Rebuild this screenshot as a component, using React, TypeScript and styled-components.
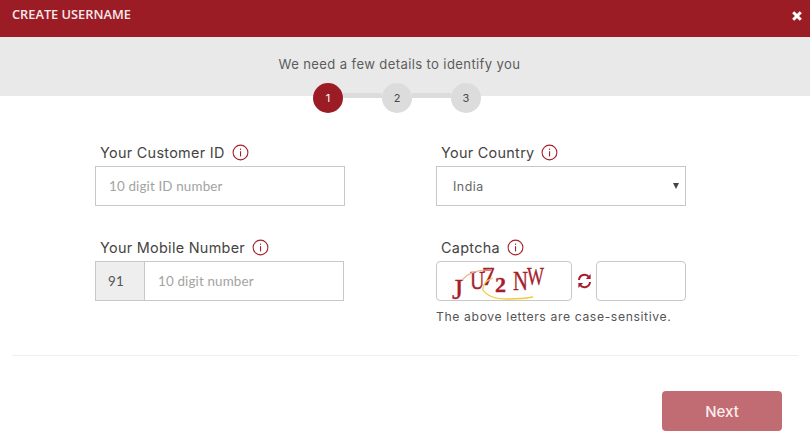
import React from "react";
import styled, { createGlobalStyle } from "styled-components";

const Global = createGlobalStyle`
  html, body { margin: 0; padding: 0; background: #fff; }
  body { font-family: "Inter", "Liberation Sans", sans-serif; overflow: hidden; }
  * { box-sizing: border-box; }
`;

const Page = styled.div`
  width: 810px;
  height: 442px;
  display: flex;
  flex-direction: column;
  background: #fff;
`;
const Header = styled.header`
  height: 37px;
  background: #9c1c26;
  display: flex;
  justify-content: space-between;
  align-items: flex-start;
  padding: 6px 7px 0 12px;
`;
const Title = styled.h1`
  margin: 0;
  font: 600 12.8px/16px "Open Sans", sans-serif;
  color: #f6e9ea;
`;
const Close = styled.button`
  border: 0;
  background: none;
  padding: 0;
  margin-top: 4px;
  width: 12px;
  height: 12px;
  display: flex;
`;
const Band = styled.div`
  height: 59px;
  background: #e9e9e9;
  display: flex;
  flex-direction: column;
  align-items: center;
  padding-top: 19px;
`;
const Lead = styled.p`
  margin: 0 11px 10px 0;
  height: 17px;
  font: 400 13.1px/17px "Inter", sans-serif;
  letter-spacing: 0.37px;
  color: #5c5c5c;
`;
const Stepper = styled.div`
  display: flex;
  align-items: center;
  flex: none;
  margin-right: 16px;
`;
const Step = styled.div<{ $active?: boolean }>`
  width: 30px;
  height: 30px;
  border-radius: 50%;
  display: flex;
  align-items: center;
  justify-content: center;
  font: 400 11px/1 "Inter", sans-serif;
  background: ${(p) => (p.$active ? "#9c1c26" : "#dcdcdc")};
  color: ${(p) => (p.$active ? "#fff" : "#4a4a4a")};
`;
const Connector = styled.div`
  width: 39px;
  height: 5px;
  margin-top: -5px;
  background: #dcdcdc;
`;
const Form = styled.div`
  display: grid;
  grid-template-columns: 250px 250px;
  column-gap: 91px;
  row-gap: 31px;
  padding: 46px 0 0 95px;
`;
const Field = styled.div`
  display: flex;
  flex-direction: column;
  min-width: 0;
`;
const LabelRow = styled.div`
  height: 24px;
  display: flex;
  align-items: center;
  gap: 7px;
  padding: 0 0 3px 5px;
`;
const Label = styled.label`
  font: 400 14.4px/20px "Inter", sans-serif;
  letter-spacing: 0.3px;
  color: #444;
`;
const InfoIcon = styled.svg`
  width: 17px;
  height: 17px;
  flex: none;
`;
const TextInput = styled.input<{ $flush?: boolean }>`
  width: ${(p) => (p.$flush ? "auto" : "100%")};
  flex: ${(p) => (p.$flush ? 1 : "none")};
  min-width: 0;
  height: ${(p) => (p.$flush ? "38px" : "40px")};
  border: ${(p) => (p.$flush ? "0" : "1px solid #c8c8c8")};
  background: #fff;
  padding: 0 13px;
  font: 400 13.4px "Lato", sans-serif;
  letter-spacing: 0.15px;
  color: #555;
  outline: none;
  &::placeholder { color: #a3a3a3; opacity: 1; }
`;
const SelectWrap = styled.div`
  position: relative;
  height: 40px;
`;
const Select = styled.select`
  appearance: none;
  width: 100%;
  height: 100%;
  border: 1px solid #c8c8c8;
  border-radius: 0;
  background: #fff;
  padding: 0 0 0 16px;
  font: 400 12.4px "Inter", sans-serif;
  letter-spacing: 0.5px;
  color: #666;
  outline: none;
`;
const Caret = styled.span`
  position: absolute;
  right: 7px;
  top: 17px;
  width: 0;
  height: 0;
  border-left: 3px solid transparent;
  border-right: 3px solid transparent;
  border-top: 6px solid #444;
  pointer-events: none;
`;
const PhoneGroup = styled.div`
  display: flex;
  height: 40px;
  width: 249px;
  border: 1px solid #c8c8c8;
`;
const Prefix = styled.span`
  width: 49px;
  flex: none;
  background: #eee;
  border-right: 1px solid #c8c8c8;
  padding-left: 12px;
  font: 400 13.4px/38px "Lato", sans-serif;
  letter-spacing: 0.3px;
  color: #555;
`;
const CaptchaRow = styled.div`
  display: flex;
  align-items: center;
  height: 40px;
`;
const CaptchaBox = styled.div`
  width: 136px;
  height: 40px;
  border: 1px solid #c8c8c8;
  border-radius: 4px;
  flex: none;
  overflow: hidden;
`;
const CaptchaArt = styled.svg`
  width: 134px;
  height: 38px;
  display: block;
`;
const Refresh = styled.button`
  width: 24px;
  flex: none;
  border: 0;
  background: none;
  padding: 0;
  display: flex;
  justify-content: center;
`;
const CaptchaInput = styled.input`
  width: 90px;
  height: 40px;
  border: 1px solid #c8c8c8;
  border-radius: 4px;
  background: #fff;
  outline: none;
`;
const Note = styled.p`
  margin: 8px 0 0;
  font: 400 12.2px/16px "Inter", sans-serif;
  letter-spacing: 0.62px;
  white-space: nowrap;
  color: #555;
`;
const Divider = styled.hr`
  margin: 30px 12px 0;
  border: 0;
  border-top: 1px solid #eee;
`;
const Footer = styled.div`
  display: flex;
  justify-content: flex-end;
  padding: 35px 28px 0 0;
`;
const NextButton = styled.button`
  width: 120px;
  height: 40px;
  border: 0;
  border-radius: 4px;
  background: #c06c72;
  color: #fbeeee;
  font: 500 15px "Inter", sans-serif;
`;

const Info = () => (
  <InfoIcon viewBox="0 0 17 17" fill="none">
    <circle cx="8.5" cy="8.5" r="7.4" stroke="#a8202c" strokeWidth="1.1" />
    <rect x="8" y="7.2" width="1.1" height="5.2" fill="#a8202c" />
    <rect x="8" y="4.6" width="1.1" height="1.3" fill="#a8202c" />
  </InfoIcon>
);

export default function App() {
  return (
    <Page>
      <Global />
      <Header>
        <Title>CREATE USERNAME</Title>
        <Close aria-label="Close">
          <svg width="12" height="12" viewBox="0 0 12 12">
            <path d="M2.2 2.2 L9.8 9.8 M9.8 2.2 L2.2 9.8" stroke="#fff" strokeWidth="3" />
          </svg>
        </Close>
      </Header>
      <Band>
        <Lead>We need a few details to identify you</Lead>
        <Stepper>
          <Step $active>1</Step>
          <Connector />
          <Step>2</Step>
          <Connector />
          <Step>3</Step>
        </Stepper>
      </Band>
      <Form>
        <Field>
          <LabelRow>
            <Label>Your Customer ID</Label>
            <Info />
          </LabelRow>
          <TextInput placeholder="10 digit ID number" />
        </Field>
        <Field>
          <LabelRow>
            <Label>Your Country</Label>
            <Info />
          </LabelRow>
          <SelectWrap>
            <Select defaultValue="India">
              <option>India</option>
            </Select>
            <Caret />
          </SelectWrap>
        </Field>
        <Field>
          <LabelRow>
            <Label>Your Mobile Number</Label>
            <Info />
          </LabelRow>
          <PhoneGroup>
            <Prefix>91</Prefix>
            <TextInput $flush placeholder="10 digit number" />
          </PhoneGroup>
        </Field>
        <Field>
          <LabelRow>
            <Label>Captcha</Label>
            <Info />
          </LabelRow>
          <CaptchaRow>
            <CaptchaBox>
              <CaptchaArt viewBox="0 0 134 38">
                <g fontFamily="'Liberation Serif', serif" fill="#a51e2c" stroke="#a51e2c" strokeWidth="0.35">
                  <text transform="translate(15 37)" fontSize="29">J</text>
                  <text transform="translate(33 27) scale(.77 1)" fontSize="26">U</text>
                  <text transform="translate(45 23)" fontSize="25" fontWeight="700">7</text>
                  <text transform="translate(58 30)" fontSize="22" fontWeight="700">2</text>
                  <text transform="translate(76 28) scale(.77 1)" fontSize="27">N</text>
                  <text transform="translate(90 23) scale(.72 1)" fontSize="25">W</text>
                </g>
                <path d="M25 18 Q34 7 55 8" fill="none" stroke="#eeb19a" strokeWidth="1.3" />
                <path d="M56 16 Q45 20 46 28 Q52 37 70 37 Q86 37 96 35" fill="none" stroke="#f2c93e" strokeWidth="1.3" />
              </CaptchaArt>
            </CaptchaBox>
            <Refresh aria-label="Refresh">
              <svg width="15" height="16" viewBox="0 0 15 16" fill="none" stroke="#a51e2c" strokeWidth="2">
                <path d="M2 7 A5.6 5.6 0 0 1 12 4" />
                <path d="M13 9 A5.6 5.6 0 0 1 3 12" />
                <path d="M13.6 1 V6 H8.8 Z" fill="#a51e2c" stroke="none" />
                <path d="M1.4 15 V10 H6.2 Z" fill="#a51e2c" stroke="none" />
              </svg>
            </Refresh>
            <CaptchaInput />
          </CaptchaRow>
          <Note>The above letters are case-sensitive.</Note>
        </Field>
      </Form>
      <Divider />
      <Footer>
        <NextButton>Next</NextButton>
      </Footer>
    </Page>
  );
}
